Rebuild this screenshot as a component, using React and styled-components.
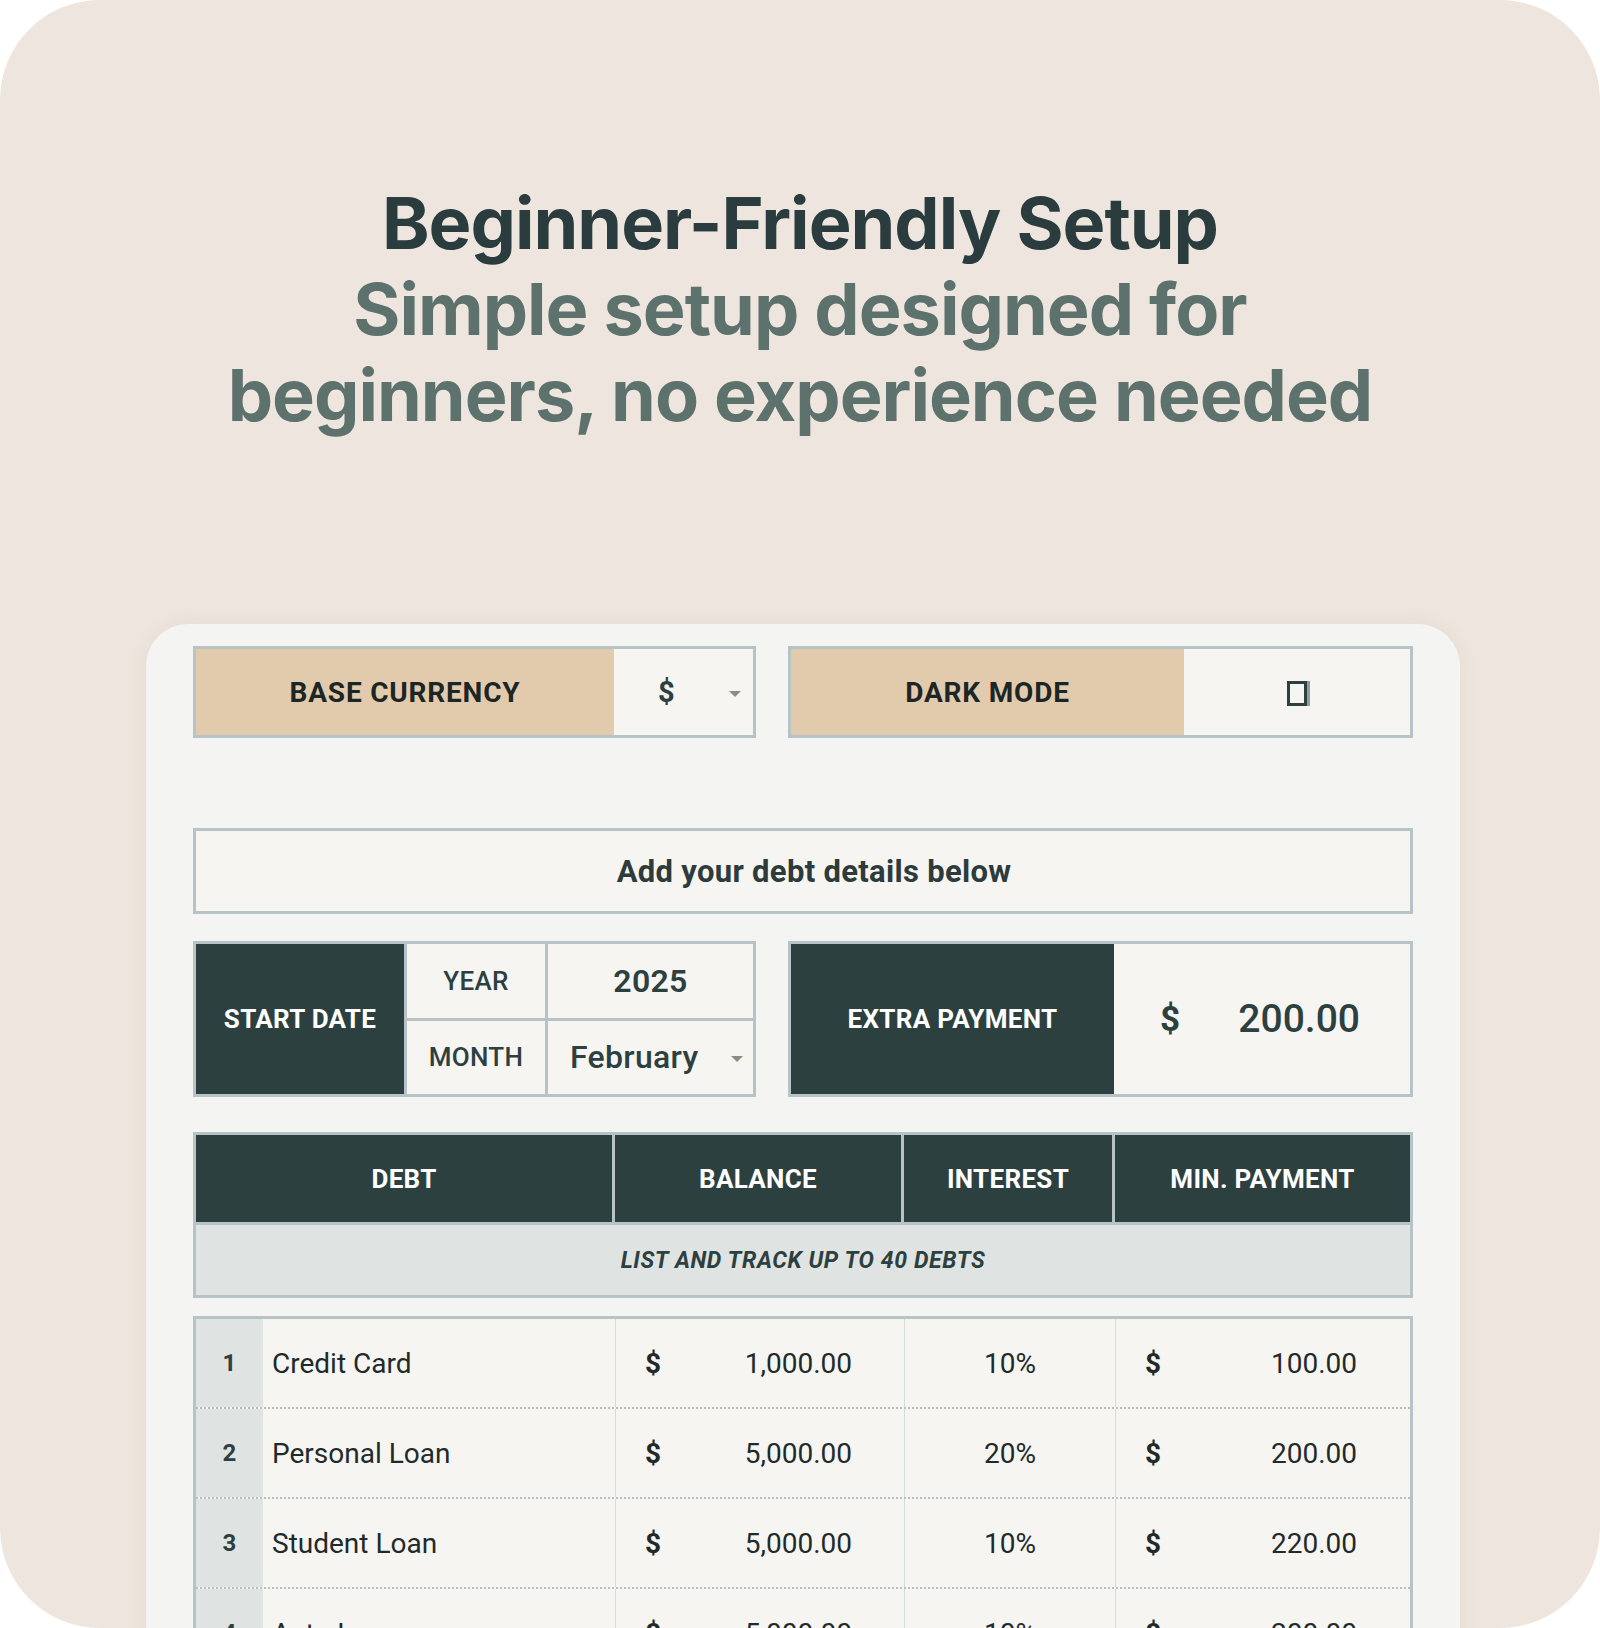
import React from 'react';
import styled, { createGlobalStyle } from 'styled-components';

const GlobalStyle = createGlobalStyle`
  * { box-sizing: border-box; }
  body {
    margin: 0;
    background: #ffffff;
    font-family: Roboto, "Liberation Sans", sans-serif;
  }
`;

const Frame = styled.div`
  width: 1600px;
  height: 1628px;
  background: #eee6de;
  border-radius: 100px;
  overflow: hidden;
  display: flex;
  flex-direction: column;
  align-items: center;
`;

const Heading = styled.div`
  padding-top: 180px;
  text-align: center;
  font-family: Inter, "Liberation Sans", sans-serif;
  font-weight: 700;
  font-size: 72px;
  line-height: 86px;
  letter-spacing: -1px;
`;

const Title = styled.h1`
  margin: 0;
  font: inherit;
  color: #2a3c3d;
`;

const Subtitle = styled.p`
  margin: 0;
  color: #5e726d;
`;

const Card = styled.div`
  margin-top: 186px;
  align-self: flex-start;
  margin-left: 146px;
  width: 1314px;
  flex: 1;
  background: #f4f4f3;
  border-radius: 42px 42px 0 0;
  box-shadow: 0 0 18px rgba(120, 100, 80, 0.08);
  padding: 22px 47px 0;
  display: flex;
  flex-direction: column;
`;

const Row = styled.div`
  display: flex;
  gap: 32px;
  margin-bottom: ${(p) => p.$after || 0}px;
`;

const Setting = styled.div`
  width: ${(p) => p.$width}px;
  height: 92px;
  border: 3px solid #b7c4c7;
  display: grid;
  grid-template-columns: ${(p) => p.$split}px 1fr;
  background: #f6f5f2;
`;

const SettingLabel = styled.div`
  background: #e2cbac;
  display: flex;
  align-items: center;
  justify-content: center;
  font-weight: 700;
  font-size: 28px;
  letter-spacing: 0.8px;
  color: #1d2626;
`;

const SettingValue = styled.div`
  position: relative;
  display: flex;
  align-items: center;
  justify-content: ${(p) => (p.$center ? 'center' : 'flex-start')};
  padding-left: ${(p) => (p.$center ? 0 : 44)}px;
  font-weight: 700;
  font-size: 29px;
  color: #2d4040;
`;

const Caret = styled.span`
  position: absolute;
  right: ${(p) => p.$right || 12}px;
  top: 50%;
  width: 0;
  height: 0;
  margin-top: -1px;
  border-left: 6px solid transparent;
  border-right: 6px solid transparent;
  border-top: 6px solid #8e8b80;
`;

const Checkbox = styled.span`
  width: 20px;
  height: 25px;
  border: 3px solid #2d4040;
  box-shadow: 3px 0 0 #939b9a;
  margin-top: 2px;
`;

const Note = styled.div`
  height: 86px;
  border: 3px solid #b7c4c7;
  background: #f6f5f2;
  display: flex;
  align-items: center;
  justify-content: center;
  padding-left: 22px;
  font-weight: 700;
  font-size: 31px;
  letter-spacing: 0.3px;
  color: #2d3b3c;
  margin-bottom: 27px;
`;

const DateBlock = styled.div`
  width: 563px;
  height: 156px;
  border: 3px solid #b7c4c7;
  background: #b7c4c7;
  display: grid;
  grid-template-columns: 208px 138px 205px;
  grid-template-rows: 1fr 1fr;
  gap: 3px;
`;

const DarkCell = styled.div`
  background: #2d4040;
  color: #ffffff;
  display: flex;
  align-items: center;
  justify-content: center;
  font-weight: 700;
  font-size: 26px;
  letter-spacing: 0.3px;
  grid-row: ${(p) => p.$span || 'auto'};
`;

const LightCell = styled.div`
  position: relative;
  background: #f6f5f2;
  color: #2d4040;
  display: flex;
  align-items: center;
  justify-content: ${(p) => (p.$left ? 'flex-start' : 'center')};
  padding-left: ${(p) => (p.$left ? 22 : 0)}px;
  font-weight: ${(p) => p.$weight || 500};
  font-size: ${(p) => p.$size || 26}px;
  letter-spacing: 0.3px;
`;

const ExtraBlock = styled.div`
  width: 625px;
  height: 156px;
  border: 3px solid #b7c4c7;
  display: grid;
  grid-template-columns: 323px 1fr;
`;

const ExtraValue = styled.div`
  background: #f6f5f2;
  display: flex;
  align-items: center;
  justify-content: space-between;
  padding: 0 50px 0 46px;
  font-size: 39px;
  font-weight: 500;
  color: #2d4040;
`;

const Dollar = styled.span`
  font-weight: 700;
  font-size: ${(p) => p.$size || 28}px;
`;

const HeadTable = styled.div`
  margin-top: 35px;
  border: 3px solid #b7c4c7;
  background: #b7c4c7;
  display: grid;
  grid-template-columns: 416px 286px 208px 295px;
  grid-template-rows: 87px 70px;
  gap: 3px;
`;

const Banner = styled.div`
  grid-column: 1 / -1;
  background: #dfe3e1;
  display: flex;
  align-items: center;
  justify-content: center;
  font-weight: 700;
  font-style: italic;
  font-size: 23px;
  letter-spacing: 0.6px;
  color: #2d4040;
`;

const DebtTable = styled.div`
  margin-top: 18px;
  border: 3px solid #b7c4c7;
  border-bottom: none;
  display: flex;
  flex-direction: column;
`;

const DebtRow = styled.div`
  display: grid;
  grid-template-columns: 67px 352px 289px 211px 295px;
  height: 90px;
  flex-shrink: 0;
  border-bottom: 2px dotted #b3c0c3;
  background: #f6f5f2;
`;

const Index = styled.div`
  background: #dfe3e1;
  display: flex;
  align-items: center;
  justify-content: center;
  font-weight: 700;
  font-size: 24px;
  color: #2d4040;
`;

const Name = styled.div`
  display: flex;
  align-items: center;
  padding-left: 9px;
  font-size: 28px;
  color: #1f2b2b;
`;

const Money = styled.div`
  border-left: 1px solid #d6dcdc;
  display: flex;
  align-items: center;
  justify-content: space-between;
  padding: 0 ${(p) => p.$right}px 0 29px;
  font-size: 28px;
  color: #1f2b2b;
`;

const Rate = styled.div`
  border-left: 1px solid #d6dcdc;
  display: flex;
  align-items: center;
  justify-content: center;
  font-size: 28px;
  color: #1f2b2b;
`;

const debts = [
  { name: 'Credit Card', balance: '1,000.00', rate: '10%', min: '100.00' },
  { name: 'Personal Loan', balance: '5,000.00', rate: '20%', min: '200.00' },
  { name: 'Student Loan', balance: '5,000.00', rate: '10%', min: '220.00' },
  { name: 'Auto Loan', balance: '5,000.00', rate: '10%', min: '200.00' },
];

const columns = ['DEBT', 'BALANCE', 'INTEREST', 'MIN. PAYMENT'];

export default function App() {
  return (
    <>
      <GlobalStyle />
      <Frame>
        <Heading>
          <Title>Beginner-Friendly Setup</Title>
          <Subtitle>
            Simple setup designed for
            <br />
            beginners, no experience needed
          </Subtitle>
        </Heading>

        <Card>
          <Row $after={90}>
            <Setting $width={563} $split={418}>
              <SettingLabel>BASE CURRENCY</SettingLabel>
              <SettingValue>
                $
                <Caret $right={12} />
              </SettingValue>
            </Setting>
            <Setting $width={625} $split={393}>
              <SettingLabel>DARK MODE</SettingLabel>
              <SettingValue $center>
                <Checkbox />
              </SettingValue>
            </Setting>
          </Row>

          <Note>Add your debt details below</Note>

          <Row>
            <DateBlock>
              <DarkCell $span="1 / 3">START DATE</DarkCell>
              <LightCell>YEAR</LightCell>
              <LightCell $size={32} $weight={600}>2025</LightCell>
              <LightCell>MONTH</LightCell>
              <LightCell $left $size={32}>
                February
                <Caret $right={10} />
              </LightCell>
            </DateBlock>
            <ExtraBlock>
              <DarkCell>EXTRA PAYMENT</DarkCell>
              <ExtraValue>
                <Dollar $size={35}>$</Dollar>
                <span>200.00</span>
              </ExtraValue>
            </ExtraBlock>
          </Row>

          <HeadTable>
            {columns.map((c) => (
              <DarkCell key={c}>{c}</DarkCell>
            ))}
            <Banner>LIST AND TRACK UP TO 40 DEBTS</Banner>
          </HeadTable>

          <DebtTable>
            {debts.map((d, i) => (
              <DebtRow key={d.name}>
                <Index>{i + 1}</Index>
                <Name>{d.name}</Name>
                <Money $right={52}>
                  <Dollar $size={28}>$</Dollar>
                  <span>{d.balance}</span>
                </Money>
                <Rate>{d.rate}</Rate>
                <Money $right={53}>
                  <Dollar $size={28}>$</Dollar>
                  <span>{d.min}</span>
                </Money>
              </DebtRow>
            ))}
          </DebtTable>
        </Card>
      </Frame>
    </>
  );
}
